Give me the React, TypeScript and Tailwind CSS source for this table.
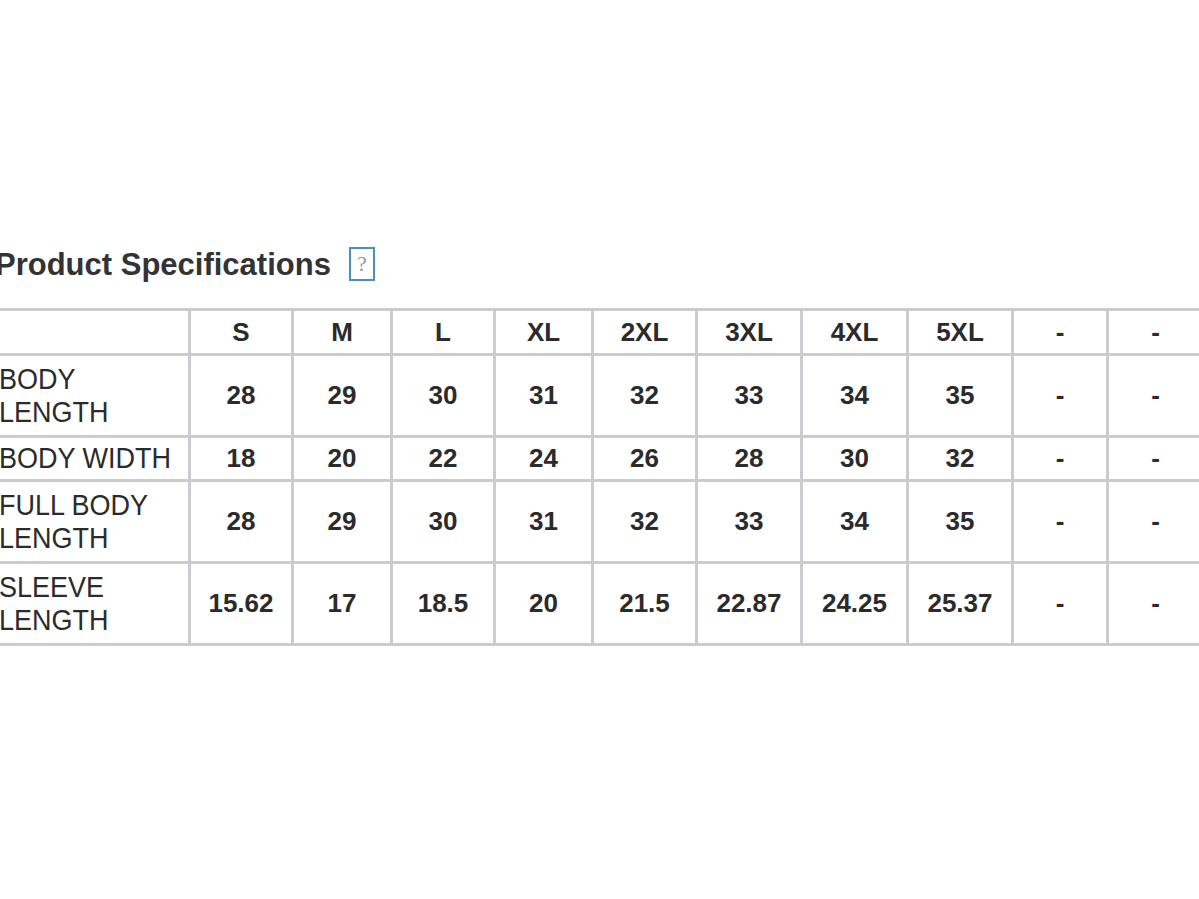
import React from "react";

const sizes = ["S", "M", "L", "XL", "2XL", "3XL", "4XL", "5XL", "-", "-"];

const colWidths = [193, 103, 99, 103, 98, 104, 105, 106, 105, 95, 96];

const rows: { label: string[]; values: string[]; tall: boolean }[] = [
  {
    label: ["BODY", "LENGTH"],
    values: ["28", "29", "30", "31", "32", "33", "34", "35", "-", "-"],
    tall: true,
  },
  {
    label: ["BODY WIDTH"],
    values: ["18", "20", "22", "24", "26", "28", "30", "32", "-", "-"],
    tall: false,
  },
  {
    label: ["FULL BODY", "LENGTH"],
    values: ["28", "29", "30", "31", "32", "33", "34", "35", "-", "-"],
    tall: true,
  },
  {
    label: ["SLEEVE", "LENGTH"],
    values: ["15.62", "17", "18.5", "20", "21.5", "22.87", "24.25", "25.37", "-", "-"],
    tall: true,
  },
];

export default function App() {
  return (
    <div className="w-[1199px] h-[899px] overflow-hidden bg-white font-['Liberation_Sans',Arial,sans-serif] text-[#2b2b2b]">
      <div className="pt-[247px] ml-[-5px]">
        {/* Heading */}
        <div className="flex items-center gap-[18px] h-[36px]">
          <h2 className="text-[31px] leading-[36px] font-bold text-[#333] whitespace-nowrap">
            Product Specifications
          </h2>
          <span className="flex items-center justify-center w-[26px] h-[34px] border-2 border-[#4b8fbd] text-[22px] leading-none text-[#999] font-['Liberation_Serif',serif] mt-[-2px]">
            ?
          </span>
        </div>

        {/* Size table */}
        <table className="mt-[25px] table-fixed border-collapse w-[1207px]">
          <colgroup>
            {colWidths.map((w, i) => (
              <col key={i} style={{ width: w }} />
            ))}
          </colgroup>
          <thead>
            <tr className="h-[45px]">
              <th className="border-[3px] border-[#cbcbd0]"></th>
              {sizes.map((s, i) => (
                <th
                  key={i}
                  className="border-[3px] border-[#cbcbd0] text-center text-[26px] font-bold p-0"
                >
                  {s}
                </th>
              ))}
            </tr>
          </thead>
          <tbody>
            {rows.map((row) => (
              <tr key={row.label.join(" ")} className={row.tall ? "h-[82px]" : "h-[44px]"}>
                <td className="border-[3px] border-[#cbcbd0] text-left text-[27px] leading-[33px] font-normal p-0 pl-[1px] whitespace-nowrap">
                  {row.label.map((l) => (
                    <div key={l} className="scale-y-110 origin-center">
                      {l}
                    </div>
                  ))}
                </td>
                {row.values.map((v, i) => (
                  <td
                    key={i}
                    className="border-[3px] border-[#cbcbd0] text-center text-[26px] font-bold p-0"
                  >
                    {v}
                  </td>
                ))}
              </tr>
            ))}
          </tbody>
        </table>
      </div>
    </div>
  );
}
